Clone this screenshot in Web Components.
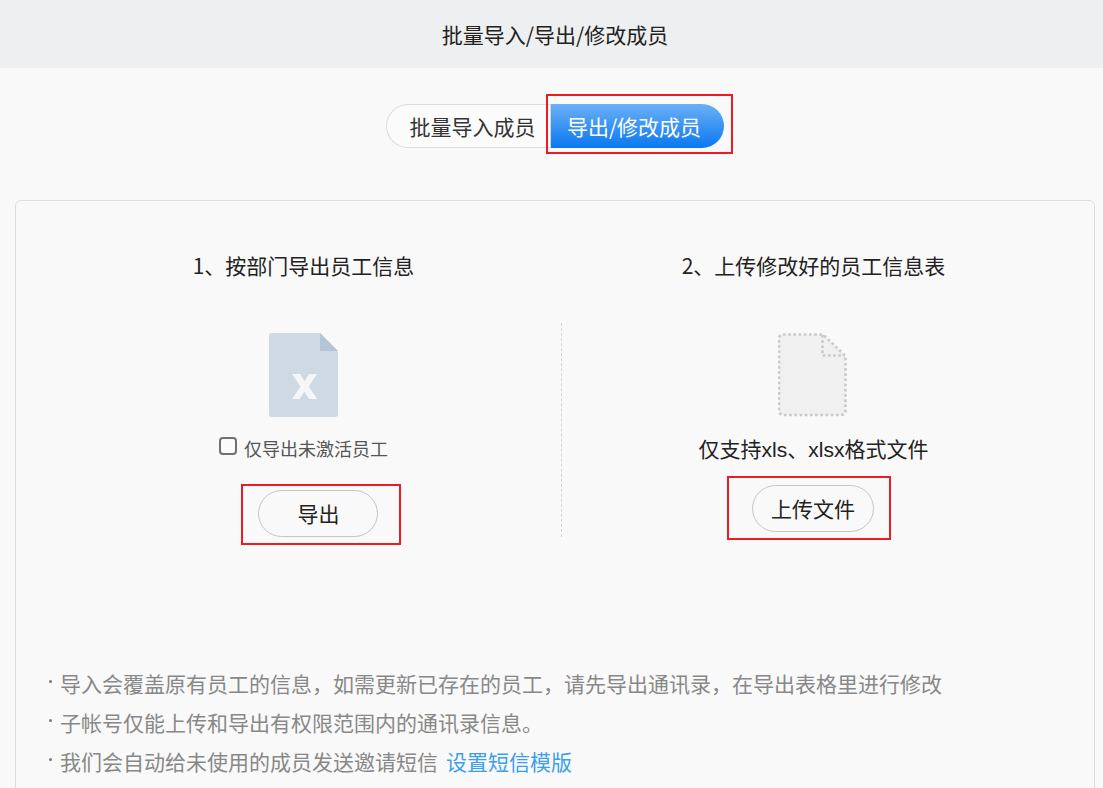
<!DOCTYPE html>
<html lang="zh-CN">
<head>
<meta charset="utf-8">
<title>批量导入/导出/修改成员</title>
<style>
html,body{margin:0;padding:0;height:788px;overflow:hidden;background:#f9f9f9;}
body{font-family:"Noto Sans CJK SC","Noto Sans",sans-serif;color:#333;font-size:21px;}
</style>
</head>
<body>
<app-page></app-page>
<template id="t-page">
<style>
:host{display:block;}
.tabs{display:flex;justify-content:center;margin:36px 0 52px 0;padding-left:7px;}
.row-h{display:grid;grid-template-columns:515px 1fr;height:122px;}
.cols{display:grid;grid-template-columns:515px 1fr;height:214px;}
.col{display:flex;flex-direction:column;align-items:center;padding-top:10px;box-sizing:border-box;}
.col.r{border-left:1px dashed #d4d4d4;}
.col.r file-icon{margin-left:-2px;}
.h{font-size:21px;color:#222;text-align:center;line-height:30px;padding-top:49px;}
.h.b{padding-left:2px;}
.opt{margin-top:11px;height:40px;}
.opt2{margin-top:18px;line-height:30px;color:#222;white-space:nowrap;margin-left:1px;font-family:"Liberation Sans","Noto Sans CJK SC",sans-serif;}
.shift{margin-left:28px;margin-top:22px;}
.up{margin-top:20px;margin-left:0;}
.notes{margin-top:127px;}
</style>
<app-header>批量导入/导出/修改成员</app-header>
<div class="tabs">
  <seg-tab side="left">批量导入成员</seg-tab>
  <red-box style="--t:-10px;--r:-9px;--b:-6px;--l:-4px"><seg-tab side="right" active>导出/修改成员</seg-tab></red-box>
</div>
<app-card>
  <div class="row-h">
    <div class="h">1、按部门导出员工信息</div>
    <div class="h b">2、上传修改好的员工信息表</div>
  </div>
  <div class="cols">
    <div class="col">
      <file-icon kind="excel"></file-icon>
      <check-row class="opt">仅导出未激活员工</check-row>
      <red-box class="shift" style="--t:-6px;--r:-23px;--b:-8px;--l:-17px"><pill-button w="120" pad="2">导出</pill-button></red-box>
    </div>
    <div class="col r">
      <file-icon kind="dotted"></file-icon>
      <div class="opt2">仅支持xls、xlsx格式文件</div>
      <red-box class="up" style="--t:-9px;--r:-17px;--b:-8px;--l:-25px"><pill-button w="122" pad="0">上传文件</pill-button></red-box>
    </div>
  </div>
  <div class="notes">
    <note-line>导入会覆盖原有员工的信息，如需更新已存在的员工，请先导出通讯录，在导出表格里进行修改</note-line>
    <note-line>子帐号仅能上传和导出有权限范围内的通讯录信息。</note-line>
    <note-line>我们会自动给未使用的成员发送邀请短信<a slot="link">设置短信模版</a></note-line>
  </div>
</app-card>
</template>
<script>
function def(name, css, html, init){
  customElements.define(name, class extends HTMLElement{
    connectedCallback(){
      if(this.shadowRoot) return;
      const s=this.attachShadow({mode:'open'});
      s.innerHTML='<style>'+css+'</style>'+(typeof html==='function'?html(this):html);
      if(init) init(this,s);
    }
  });
}
customElements.define('app-page', class extends HTMLElement{
  connectedCallback(){
    const s=this.attachShadow({mode:'open'});
    s.appendChild(document.getElementById('t-page').content.cloneNode(true));
  }
});
def('app-header',
 ':host{display:flex;align-items:center;justify-content:center;height:68px;background:#eeeff0;color:#222;font-size:21px;padding-left:7px;box-sizing:border-box;}',
 '<slot></slot>');
def('seg-tab',
 `:host{display:flex;align-items:center;justify-content:center;box-sizing:border-box;height:44px;font-size:21px;color:#333;background:#fbfbfb;border:1px solid #dcdcdc;white-space:nowrap;}
  :host([side=left]){width:164px;border-radius:22px 0 0 22px;border-right:0;padding:0 15px 0 23px;}
  :host([side=right]){width:174px;border-radius:0 22px 22px 0;border:0;border-left:1px solid #ccd6e0;padding:0 24px 0 17px;}
  :host([active]){color:#fff;background:linear-gradient(#6cb0f5,#0a78f2);}`,
 '<slot></slot>');
def('red-box',
 `:host{display:block;position:relative;}
  .o{position:absolute;top:var(--t);right:var(--r);bottom:var(--b);left:var(--l);border:2px solid #ed1c24;pointer-events:none;}`,
 '<slot></slot><div class="o"></div>');
def('app-card',
 ':host{display:block;box-sizing:border-box;margin:0 8px 0 15px;height:700px;background:#f9f9f9;border:1px solid #dddddd;border-radius:6px;padding:0 30px;}',
 '<slot></slot>');
def('file-icon',
 ':host{display:block;width:69px;height:84px;} svg{display:block;}',
 h=>h.getAttribute('kind')==='excel'
 ? `<svg width="69" height="84" viewBox="0 0 69 84" role="img" aria-label="excel"><path d="M3 0H51L69 18V81a3 3 0 0 1-3 3H3a3 3 0 0 1-3-3V3a3 3 0 0 1 3-3Z" fill="#cfd9e3"/><path d="M51 0L69 18H51Z" fill="#b4c6d5"/><path d="M23 41h8.200l4.400 7.200L40 41h8l-8.300 12.500L48.300 66H40l-4.600-7.600L30.800 66H23l8.500-12.500Z" fill="#f4f6f8"/></svg>`
 : `<svg width="69" height="84" viewBox="0 0 69 84" role="img" aria-label="file"><path d="M5 1.500H45L67.500 23V78a4 4 0 0 1-4 4H5a4 4 0 0 1-4-4V5.500a4 4 0 0 1 4-4Z" fill="#f0f0f0" stroke="#c9c9c9" stroke-width="2.600" stroke-dasharray="2.600 2.600"/><path d="M44.500 2V22.500H67" fill="none" stroke="#c9c9c9" stroke-width="2.600" stroke-dasharray="2.600 2.600"/></svg>`);
def('check-row',
 `:host{display:flex;align-items:center;gap:7px;font-size:18px;color:#555;white-space:nowrap;height:40px;}
  .b{width:18px;height:18px;box-sizing:border-box;border:2px solid #707070;border-radius:4px;background:#fbfbfb;margin-top:-5px;}`,
 '<span class="b"></span><slot></slot>');
def('pill-button',
 `:host{display:flex;align-items:center;justify-content:center;box-sizing:border-box;height:47px;border:1px solid #c4c4cc;border-radius:24px;color:#222;font-size:21px;white-space:nowrap;padding-bottom:2px;}`,
 h=>`<style>:host{width:${h.getAttribute('w')}px;padding-left:${h.getAttribute('pad')||0}px}</style><slot></slot>`);
def('note-line',
 `:host{display:flex;line-height:39px;height:39px;font-size:21px;color:#888;white-space:nowrap;}
  .d{flex:none;width:3px;height:3px;border-radius:50%;background:#777;margin:16px 8px 0 3px;}
  ::slotted(a){color:#3a9ff0;margin-left:8px;}`,
 '<span class="d"></span><slot></slot><slot name="link"></slot>');
</script>
</body>
</html>
